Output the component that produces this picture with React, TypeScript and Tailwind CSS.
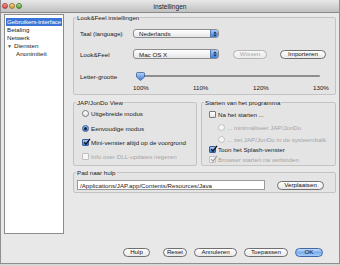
import React from "react";

function Light({ color }: { color: "r" | "y" | "g" }) {
  const cls =
    color === "r"
      ? "bg-gradient-to-b from-[#f5a09a] to-[#d6443c] border-[#a8453f]"
      : color === "y"
      ? "bg-gradient-to-b from-[#f2d99a] to-[#c99a2c] border-[#a07a30]"
      : "bg-gradient-to-b from-[#b8e39a] to-[#4f9e2c] border-[#4a7f33]";
  return <span className={`block w-[6px] h-[6px] rounded-full border ${cls}`} />;
}

function Select({ label }: { label: string }) {
  return (
    <div className="w-[86px] h-full rounded-[3px] border border-[#8c8c8c] bg-gradient-to-b from-white to-[#e6e6e6] flex items-center overflow-hidden">
      <span className="flex-1 pl-[5px]">{label}</span>
      <span className="w-[8px] h-full bg-gradient-to-b from-[#a9cbf5] to-[#3f7fd9] border-l border-[#5079b5] flex items-center justify-center">
        <svg width="4" height="6" viewBox="0 0 4 6">
          <path d="M0.3 2.4 L2 0.4 L3.7 2.4Z M0.3 3.6 L2 5.6 L3.7 3.6Z" fill="#1d2a44" />
        </svg>
      </span>
    </div>
  );
}

function Button({ label, w, disabled, primary }: { label: string; w: string; disabled?: boolean; primary?: boolean }) {
  const base = "h-[9px] rounded-full border flex items-center justify-center leading-none shrink-0 whitespace-nowrap";
  const look = primary
    ? "border-[#3f67a8] bg-gradient-to-b from-[#c6ddf8] via-[#79aeee] to-[#a9cdf6] text-[#111]"
    : disabled
    ? "border-[#b4b4b4] bg-gradient-to-b from-[#f8f8f8] to-[#ececec] text-[#a8a8a8]"
    : "border-[#6f6f6f] bg-gradient-to-b from-white to-[#e9e9e9] text-[#111]";
  return <div className={`${base} ${look} ${w}`}>{label}</div>;
}

function Radio({ checked, disabled }: { checked?: boolean; disabled?: boolean }) {
  if (checked) {
    return (
      <span className="w-[7px] h-[7px] rounded-full border border-[#3b5f9a] bg-gradient-to-b from-[#a6c8f3] to-[#3c79d4] flex items-center justify-center shrink-0">
        <span className="w-[3px] h-[3px] rounded-full bg-[#13203a]" />
      </span>
    );
  }
  return (
    <span
      className={
        disabled
          ? "w-[7px] h-[7px] rounded-full border border-[#c0c0c0] bg-[#f6f6f6] shrink-0"
          : "w-[7px] h-[7px] rounded-full border border-[#7a7a7a] bg-gradient-to-b from-white to-[#e4e4e4] shrink-0"
      }
    />
  );
}

function Check({ checked, disabled }: { checked?: boolean; disabled?: boolean }) {
  if (checked && !disabled) {
    return (
      <span className="relative w-[7px] h-[7px] rounded-[1px] border border-[#3b5f9a] bg-gradient-to-b from-[#a6c8f3] to-[#3c79d4] shrink-0">
        <svg className="absolute left-[0px] top-[-2px]" width="8" height="8" viewBox="0 0 8 8">
          <path d="M1.2 4.2 L3 6.2 L7 0.8" stroke="#111" strokeWidth="1.3" fill="none" />
        </svg>
      </span>
    );
  }
  if (checked && disabled) {
    return (
      <span className="relative w-[7px] h-[7px] rounded-[1px] border border-[#c0c0c0] bg-[#f4f4f4] shrink-0">
        <svg className="absolute left-[0px] top-[-2px]" width="8" height="8" viewBox="0 0 8 8">
          <path d="M1.2 4.2 L3 6.2 L7 0.8" stroke="#a0a0a0" strokeWidth="1.2" fill="none" />
        </svg>
      </span>
    );
  }
  return (
    <span
      className={
        disabled
          ? "w-[7px] h-[7px] rounded-[1px] border border-[#c0c0c0] bg-[#f6f6f6] shrink-0"
          : "w-[7px] h-[7px] rounded-[1px] border border-[#7a7a7a] bg-gradient-to-b from-white to-[#e4e4e4] shrink-0"
      }
    />
  );
}

export default function App() {
  return (
    <div className="w-[340px] h-[266px] bg-[#d6d6d6] overflow-hidden font-['Liberation_Sans',Arial,sans-serif] text-[6.2px] leading-[7px] text-[#1a1a1a]">
      <div className="h-[264px] bg-[#e8e8e8] flex flex-col border-x border-b border-[#8f8f8f]">
        {/* title bar */}
        <div className="h-[13px] shrink-0 grid grid-cols-[1fr_auto_1fr] items-center bg-gradient-to-b from-[#e8e8e8] to-[#c0c0c0] border-b border-[#8a8a8a]">
          <div className="flex items-center gap-[1px] pl-[1px]">
            <Light color="r" />
            <Light color="y" />
            <Light color="g" />
          </div>
          <div className="text-[6.6px] text-[#222]">instellingen</div>
          <div />
        </div>

        <div className="flex flex-1 pl-[3px] pt-[1px]">
          {/* tree */}
          <div className="w-[60px] h-[220px] bg-white border border-[#8d8d8d] pt-[3px] shrink-0 whitespace-nowrap overflow-hidden">
            <div className="mx-[1px] h-[8px] leading-[8px] bg-[#3a74d6] text-white pl-[1px] tracking-[-0.1px]">Gebruikers-interface</div>
            <div className="h-[8px] leading-[8px] pl-[2px]">Betaling</div>
            <div className="h-[8px] leading-[8px] pl-[2px]">Netwerk</div>
            <div className="h-[8px] leading-[8px] pl-[2px] flex items-center gap-[2px]">
              <span className="text-[5px] text-[#555]">▼</span>
              <span>Diensten</span>
            </div>
            <div className="h-[8px] leading-[8px] pl-[11px]">Anonimiteit</div>
          </div>

          {/* right column */}
          <div className="ml-[9px] w-[263px] flex flex-col">
            {/* Look & Feel */}
            <fieldset className="border border-[#c3c3c3] rounded-[2px] px-[2px] pb-[3px] bg-[#e4e4e4]">
              <legend className="px-[1px] leading-[7px]">Look&amp;Feel instellingen</legend>
              <div className="pl-[4px]">
                <div className="mt-[8px] h-[9px] flex items-center">
                  <span className="w-[53px]">Taal (language)</span>
                  <Select label="Nederlands" />
                </div>
                <div className="mt-[11px] h-[10px] flex items-center">
                  <span className="w-[53px]">Look&amp;Feel</span>
                  <Select label="Mac OS X" />
                  <div className="ml-[14px]">
                    <Button label="Wissen" w="w-[34px]" disabled />
                  </div>
                  <div className="ml-[13px]">
                    <Button label="Importeren" w="w-[46px]" />
                  </div>
                </div>
                <div className="mt-[12px] h-[10px] flex items-center">
                  <span className="w-[53px]">Letter-grootte</span>
                  <div className="relative w-[194px] h-full flex items-center">
                    <div className="ml-[4px] w-[183px] h-[2px] rounded-full bg-[#8e8e8e]" />
                    <svg className="absolute left-[3px] top-[1px]" width="9" height="9" viewBox="0 0 9 9">
                      <defs>
                        <linearGradient id="tg" x1="0" y1="0" x2="0" y2="1">
                          <stop offset="0" stopColor="#b9d5f6" />
                          <stop offset="1" stopColor="#3b78d3" />
                        </linearGradient>
                      </defs>
                      <path d="M1.5 0.5 H7.5 Q8.5 0.5 8.5 1.5 V5 L4.5 8.5 L0.5 5 V1.5 Q0.5 0.5 1.5 0.5Z" fill="url(#tg)" stroke="#3a5e98" strokeWidth="0.8" />
                    </svg>
                  </div>
                </div>
                <div className="mt-[3px] h-[7px] flex">
                  <span className="w-[53px]" />
                  <div className="w-[194px] flex justify-between">
                    <span className="w-[14px] text-center">100%</span>
                    <span className="w-[14px] text-center">110%</span>
                    <span className="w-[14px] text-center">120%</span>
                    <span className="w-[14px] text-center">130%</span>
                  </div>
                </div>
              </div>
            </fieldset>

            {/* two groups */}
            <div className="mt-[4px] flex">
              <fieldset className="w-[124px] h-[67px] border border-[#c3c3c3] rounded-[2px] px-[2px] bg-[#e4e4e4]">
                <legend className="px-[1px] leading-[7px]">JAP/JonDo View</legend>
                <div className="pl-[6px]">
                  <div className="mt-[3px] h-[8px] flex items-center gap-[2px]">
                    <Radio />
                    <span>Uitgebreide modus</span>
                  </div>
                  <div className="mt-[7px] h-[8px] flex items-center gap-[2px]">
                    <Radio checked />
                    <span>Eenvoudige modus</span>
                  </div>
                  <div className="mt-[6px] h-[8px] flex items-center gap-[2px] whitespace-nowrap">
                    <Check checked />
                    <span>Mini-venster altijd op de voorgrond</span>
                  </div>
                  <div className="mt-[6px] h-[8px] flex items-center gap-[2px] whitespace-nowrap text-[#a4a4a4]">
                    <Check disabled />
                    <span>Info over DLL-updates negeren</span>
                  </div>
                </div>
              </fieldset>
              <fieldset className="ml-[4px] w-[135px] h-[67px] border border-[#c3c3c3] rounded-[2px] px-[2px] bg-[#e4e4e4]">
                <legend className="px-[1px] leading-[7px]">Starten van het programma</legend>
                <div className="pl-[5px] whitespace-nowrap">
                  <div className="mt-[4px] h-[8px] flex items-center gap-[2px]">
                    <Check />
                    <span>Na het starten ...</span>
                  </div>
                  <div className="mt-[5px] h-[8px] flex items-center gap-[2px] pl-[9px] text-[#a4a4a4]">
                    <Radio disabled />
                    <span>... minimaliseer JAP/JonDo</span>
                  </div>
                  <div className="mt-[4px] h-[8px] flex items-center gap-[2px] pl-[9px] text-[#a4a4a4]">
                    <Radio disabled />
                    <span>... zet JAP/JonDo in de systeembalk</span>
                  </div>
                  <div className="mt-[2px] h-[8px] flex items-center gap-[2px]">
                    <Check checked />
                    <span>Toon het Splash-venster</span>
                  </div>
                  <div className="mt-[2px] h-[8px] flex items-center gap-[2px] text-[#a4a4a4]">
                    <Check checked disabled />
                    <span>Browser starten na verbinden</span>
                  </div>
                </div>
              </fieldset>
            </div>

            {/* Pad naar hulp */}
            <fieldset className="mt-[3px] border border-[#c3c3c3] rounded-[2px] px-[2px] pb-[2px] bg-[#e4e4e4]">
              <legend className="px-[1px] leading-[7px]">Pad naar hulp</legend>
              <div className="mt-[4px] h-[10px] flex items-center pl-[1px]">
                <div className="w-[188px] h-full bg-white border border-[#9a9a9a] flex items-center pl-[2px] whitespace-nowrap overflow-hidden">
                  /Applications/JAP.app/Contents/Resources/Java
                </div>
                <div className="ml-[12px]">
                  <Button label="Verplaatsen" w="w-[47px]" />
                </div>
              </div>
            </fieldset>

            {/* buttons */}
            <div className="mt-auto mb-[6px] h-[9px] flex justify-end pr-[13px]">
              <Button label="Hulp" w="w-[27px]" />
              <div className="ml-[13px]">
                <Button label="Reset" w="w-[24px]" />
              </div>
              <div className="ml-[7px]">
                <Button label="Annuleren" w="w-[43px]" />
              </div>
              <div className="ml-[7px]">
                <Button label="Toepassen" w="w-[44px]" />
              </div>
              <div className="ml-[7px]">
                <Button label="OK" w="w-[28px]" primary />
              </div>
            </div>
          </div>
        </div>
      </div>
    </div>
  );
}
